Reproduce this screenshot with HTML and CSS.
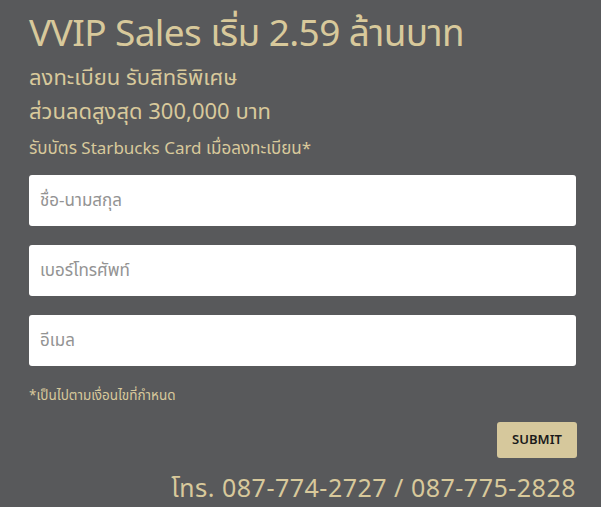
FILE: index.html
```html
<!DOCTYPE html>
<html lang="th">
<head>
  <meta charset="UTF-8" />
  <meta name="viewport" content="width=device-width, initial-scale=1.0"/>
  <title>VVIP Sales Register</title>
  <link rel="stylesheet" href="styles.css">
</head>
<body>

  <!-- Promo heading -->
  <div class="promo">
    <h1>VVIP Sales เริ่ม 2.59 ล้านบาท</h1>
    <p class="sub">ลงทะเบียน รับสิทธิพิเศษ</p>
    <p class="sub">ส่วนลดสูงสุด 300,000 บาท</p>
    <p class="note">รับบัตร Starbucks Card เมื่อลงทะเบียน*</p>
  </div>

  <!-- Register form -->
  <form class="register" id="registerForm">
    <input type="text" placeholder="ชื่อ-นามสกุล" required />
    <input type="tel" placeholder="เบอร์โทรศัพท์" required />
    <input type="email" placeholder="อีเมล" required />
    <p class="terms">*เป็นไปตามเงื่อนไขที่กำหนด</p>
    <div class="actions">
      <button type="submit">SUBMIT</button>
    </div>
  </form>

  <p class="phone">โทร. 087-774-2727 / 087-775-2828</p>

</body>
</html>
```

FILE: styles.css
```css
body {
  font-family: 'Noto Sans Thai', 'Noto Sans', sans-serif;
  margin: 0;
  padding: 14px 25px 0 29px;
  background-color: #58595b;
  color: #d8c99b;
}

h1, p {
  margin: 0;
}

h1 {
  font-size: 37px;
  font-weight: 400;
  line-height: 42px;
  letter-spacing: -0.6px;
  margin-bottom: 6px;
}

.sub {
  font-size: 22px;
  line-height: 34px;
}

.note {
  font-size: 17px;
  line-height: 30px;
  margin-top: 4px;
}

.register {
  display: flex;
  flex-direction: column;
  margin-top: 11px;
}

input {
  height: 51px;
  margin-bottom: 19px;
  padding: 0 11px;
  border: none;
  border-radius: 3px;
  background: #fff;
  font-family: inherit;
  font-size: 17px;
  box-sizing: border-box;
}

input::placeholder {
  color: #939393;
}

.terms {
  font-size: 13.5px;
  margin-top: 1px;
}

.actions {
  display: flex;
  justify-content: flex-end;
  margin-top: 16px;
}

button {
  background-color: #d6c89c;
  color: #1a1a1a;
  border: none;
  border-radius: 3px;
  width: 80px;
  height: 36px;
  margin-right: -1px;
  font-family: inherit;
  font-size: 13px;
  font-weight: 600;
  cursor: pointer;
}

.phone {
  text-align: right;
  font-size: 25px;
  line-height: 28px;
  letter-spacing: 0.5px;
  margin-top: 17px;
}
```
